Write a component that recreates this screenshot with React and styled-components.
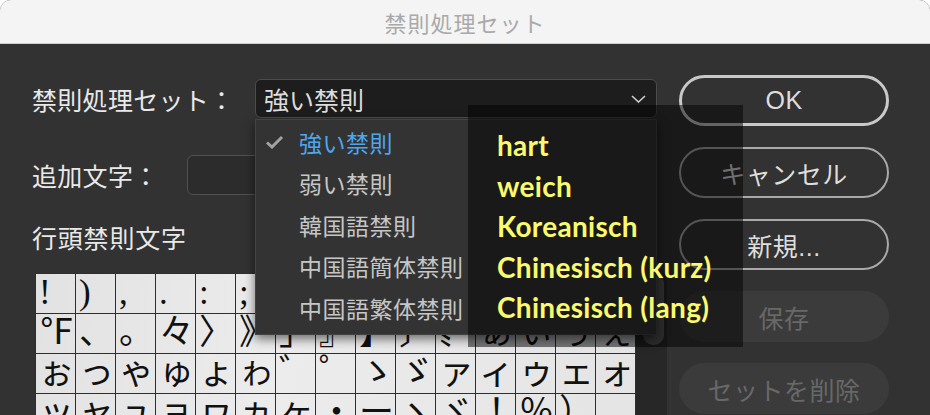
import React from 'react'
import styled, { createGlobalStyle } from 'styled-components'

const rows = [
  ['!', ')', ',', '.', ':', ';', '?', ']', '}', '¢', '—', '’', '”', '‰', '℃'],
  ['℉', '、', '。', '々', '〉', '》', '」', '』', '】', '〕', '〟', 'ぁ', 'ぃ', 'ぅ', 'ぇ'],
  ['ぉ', 'っ', 'ゃ', 'ゅ', 'ょ', 'ゎ', '゛', '゜', 'ゝ', 'ゞ', 'ァ', 'ィ', 'ゥ', 'ェ', 'ォ'],
  ['ッ', 'ャ', 'ュ', 'ョ', 'ヮ', 'ヵ', 'ヶ', '・', 'ー', 'ヽ', 'ヾ', '！', '％', '）', '，'],
  ['．', '：', '；', '？', '］', '｝', '｡', '｣', '､', '･', 'ｧ', 'ｨ', 'ｩ', 'ｪ', 'ｫ'],
]

const options = ['強い禁則', '弱い禁則', '韓国語禁則', '中国語簡体禁則', '中国語繁体禁則']
const notes = ['hart', 'weich', 'Koreanisch', 'Chinesisch (kurz)', 'Chinesisch (lang)']

function Check() {
  return (
    <svg width="19" height="14" viewBox="0 0 19 14">
      <polyline points="2,7.5 7,12 17,2" fill="none" stroke="#a2a2a2" strokeWidth="3" />
    </svg>
  )
}

function Chevron() {
  return (
    <svg width="15" height="8" viewBox="0 0 15 8">
      <polyline points="1,1 7.5,7 14,1" fill="none" stroke="#cfcfcf" strokeWidth="1.6" />
    </svg>
  )
}

export default function App() {
  return (
    <>
      <GlobalStyle />
      <Window>
        <TitleBar>禁則処理セット</TitleBar>
        <Body>
          <Left>
            <Row>
              <Label width={223}>禁則処理セット：</Label>
              <SelectWrap>
                <Select>
                  <span>強い禁則</span>
                  <Chevron />
                </Select>
                <Menu>
                  {options.map((o, i) => (
                    <Item key={o} selected={i === 0}>
                      <CheckSlot>{i === 0 && <Check />}</CheckSlot>
                      {o}
                    </Item>
                  ))}
                </Menu>
              </SelectWrap>
            </Row>
            <Row gap={37}>
              <Label width={155}>追加文字：</Label>
              <Input />
            </Row>
            <Section>行頭禁則文字</Section>
            <GridFrame>
              <Grid>
                {rows.flat().map((c, i) => (
                  <Cell key={i}>{c}</Cell>
                ))}
              </Grid>
              <Track>
                <Thumb />
              </Track>
            </GridFrame>
          </Left>
          <Right>
            <Button primary>OK</Button>
            <Button>キャンセル</Button>
            <Button>新規...</Button>
            <Button disabled>保存</Button>
            <Button disabled>セットを削除</Button>
          </Right>
        </Body>
        <Notes>
          {notes.map((n) => (
            <Note key={n}>{n}</Note>
          ))}
        </Notes>
      </Window>
    </>
  )
}

const GlobalStyle = createGlobalStyle`
  html, body {
    margin: 0;
    padding: 0;
    background: #ffffff;
  }
  body {
    font-family: "Liberation Sans", "Noto Sans CJK JP", sans-serif;
  }
`

const Window = styled.div`
  position: relative;
  width: 930px;
  height: 415px;
  overflow: hidden;
  border-radius: 11px 11px 0 0;
  background: #323232;
`

const TitleBar = styled.div`
  height: 43px;
  background: #f4f4f4;
  border-bottom: 1px solid #cfcfcf;
  display: flex;
  align-items: center;
  justify-content: center;
  font-family: "Noto Sans CJK JP", sans-serif;
  font-size: 22px;
  letter-spacing: 1px;
  color: #a9a9a9;
`

const Body = styled.div`
  display: flex;
  gap: 12px;
  padding: 31px 0 0 32px;
`

const Left = styled.div`
  width: 635px;
  display: flex;
  flex-direction: column;
`

const Row = styled.div`
  display: flex;
  align-items: center;
  margin-top: ${(p) => p.gap || 4}px;
`

const Label = styled.div`
  width: ${(p) => p.width}px;
  flex-shrink: 0;
  font-family: "Noto Sans CJK JP", sans-serif;
  font-size: 25px;
  letter-spacing: 0.3px;
  color: #e9e9e9;
`

const SelectWrap = styled.div`
  position: relative;
  width: 402px;
`

const Select = styled.div`
  box-sizing: border-box;
  height: 39px;
  display: flex;
  align-items: center;
  justify-content: space-between;
  padding: 0 10px 0 8px;
  background: #1d1d1d;
  border: 1.5px solid #4c4c4c;
  border-radius: 6px;
  font-family: "Noto Sans CJK JP", sans-serif;
  font-size: 25px;
  color: #dcdcdc;
`

const Menu = styled.div`
  position: absolute;
  top: calc(100% + 1px);
  left: 0;
  right: 0;
  z-index: 2;
  padding: 1px 0 5px;
  background: #333333;
  border: 1px solid #434343;
  box-shadow: 0 4px 10px rgba(0, 0, 0, 0.55);
`

const Item = styled.div`
  height: 41.5px;
  display: flex;
  align-items: center;
  font-family: "Noto Sans CJK JP", sans-serif;
  font-size: 23px;
  letter-spacing: 0.5px;
  color: ${(p) => (p.selected ? '#4ca7ef' : '#c6c6c6')};
`

const CheckSlot = styled.span`
  width: 43px;
  padding-left: 9px;
  box-sizing: border-box;
  display: flex;
  align-items: center;
`

const Input = styled.div`
  box-sizing: border-box;
  width: 470px;
  height: 40px;
  background: #2c2c2c;
  border: 1.5px solid #515151;
  border-radius: 6px;
`

const Section = styled.div`
  margin-top: 27px;
  font-family: "Noto Sans CJK JP", sans-serif;
  font-size: 25px;
  line-height: 30px;
  letter-spacing: 0.8px;
  color: #e9e9e9;
`

const GridFrame = styled.div`
  margin: 21px 0 0 3px;
  display: flex;
  align-items: flex-start;
`

const Grid = styled.div`
  display: grid;
  grid-template-columns: repeat(15, 40px);
  grid-auto-rows: 40px;
  border-left: 1px solid #2e2e2e;
  border-top: 1px solid #2e2e2e;
  background: linear-gradient(100deg, #e2e2e2, #ececec 40%, #e4e4e4);
`

const Cell = styled.div`
  box-sizing: border-box;
  border-right: 1px solid #2e2e2e;
  border-bottom: 1px solid #2e2e2e;
  padding-left: 3px;
  overflow: hidden;
  white-space: nowrap;
  font-family: "Liberation Serif", "Noto Sans CJK JP", serif;
  font-size: 35px;
  line-height: 37px;
  color: #111111;
`

const Track = styled.div`
  width: 31px;
  height: 160px;
  background: #272727;
  padding-left: 7px;
  box-sizing: border-box;
`

const Thumb = styled.div`
  width: 21px;
  height: 72px;
  border-radius: 10px;
  background: #585858;
`

const Right = styled.div`
  width: 210px;
  display: flex;
  flex-direction: column;
  gap: 21px;
`

const Button = styled.div`
  box-sizing: border-box;
  height: 51px;
  border-radius: 26px;
  display: flex;
  align-items: center;
  justify-content: center;
  font-family: "Liberation Sans", "Noto Sans CJK JP", sans-serif;
  font-size: 25px;
  letter-spacing: 0.5px;
  color: ${(p) => (p.disabled ? '#686868' : '#dedede')};
  background: ${(p) => (p.disabled ? '#3b3b3b' : 'transparent')};
  border: ${(p) =>
    p.disabled ? 'none' : p.primary ? '3px solid #c9c9c9' : '2px solid #a9a9a9'};
`

const Notes = styled.div`
  position: absolute;
  left: 468px;
  top: 105px;
  width: 275px;
  height: 242px;
  box-sizing: border-box;
  padding: 20px 0 0 29px;
  background: rgba(0, 0, 0, 0.5);
  z-index: 3;
`

const Note = styled.div`
  height: 40.5px;
  display: flex;
  align-items: center;
  font-family: Lato, "Open Sans", sans-serif;
  font-weight: 700;
  font-size: 28px;
  letter-spacing: 0.3px;
  color: #fafa6c;
  white-space: nowrap;
`
